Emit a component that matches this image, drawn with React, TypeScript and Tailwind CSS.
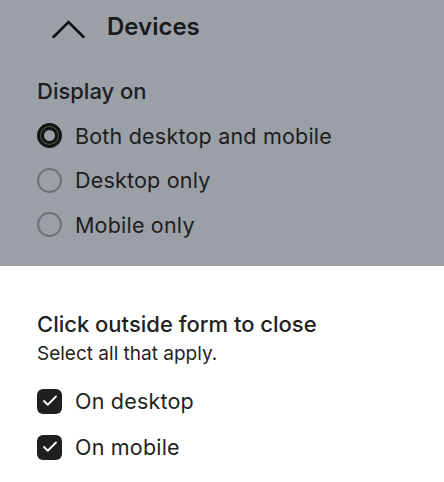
import { Check } from "lucide-react";

const font = { fontFamily: "Inter, 'Noto Sans', sans-serif" };

function Radio({ label, checked }: { label: string; checked?: boolean }) {
  return (
    <label className="flex items-center gap-[13px] h-[44.5px]">
      {checked ? (
        <span className="w-[25px] h-[25px] rounded-full border-[3px] border-[#141414] shadow-[inset_0_0_0_1px_#555,inset_0_0_0_4px_#141414] shrink-0" />
      ) : (
        <span className="w-[25px] h-[25px] rounded-full border-2 border-[#6e7175] shrink-0" />
      )}
      <span className="text-[21.5px] text-[#1c1d1f] leading-[28px] tracking-[0.2px]">{label}</span>
    </label>
  );
}

function CheckRow({ label }: { label: string }) {
  return (
    <label className="flex items-center gap-[13px] h-[46px]">
      <span className="w-[25px] h-[25px] rounded-[6px] bg-[#1f1f1f] flex items-center justify-center shrink-0">
        <Check className="w-[18px] h-[18px] text-white" strokeWidth={2.4} />
      </span>
      <span className="text-[21.5px] text-[#1f1f1f] leading-[28px] tracking-[0.2px]">{label}</span>
    </label>
  );
}

export default function App() {
  return (
    <div className="w-[444px] h-[482px] bg-white overflow-hidden" style={font}>
      <section className="bg-[#9aa0a6] h-[266px] px-[37px]">
        <div className="flex items-center h-[54px] pl-[15px] gap-[22px]">
          <svg width="33" height="18" viewBox="0 0 33 18" fill="none" className="mt-[4px]">
            <path d="M1.5 17 L16.5 2 L31.5 17" stroke="#111" strokeWidth="2.6" strokeLinecap="round" strokeLinejoin="miter" />
          </svg>
          <h2 className="text-[24px] font-semibold text-[#1a1b1d] leading-[30px]">Devices</h2>
        </div>
        <div className="mt-[23px] text-[22px] font-medium text-[#1c1d1f] leading-[28px]">Display on</div>
        <div className="mt-[8.5px] flex flex-col">
          <Radio label="Both desktop and mobile" checked />
          <Radio label="Desktop only" />
          <Radio label="Mobile only" />
        </div>
      </section>
      <section className="px-[37px] pt-[44px]">
        <div className="text-[22px] font-medium text-[#1f1f1f] leading-[28px]">Click outside form to close</div>
        <div className="text-[19px] text-[#1f1f1f] leading-[26px] mt-[3px]">Select all that apply.</div>
        <div className="mt-[11px] flex flex-col">
          <CheckRow label="On desktop" />
          <CheckRow label="On mobile" />
        </div>
      </section>
    </div>
  );
}
